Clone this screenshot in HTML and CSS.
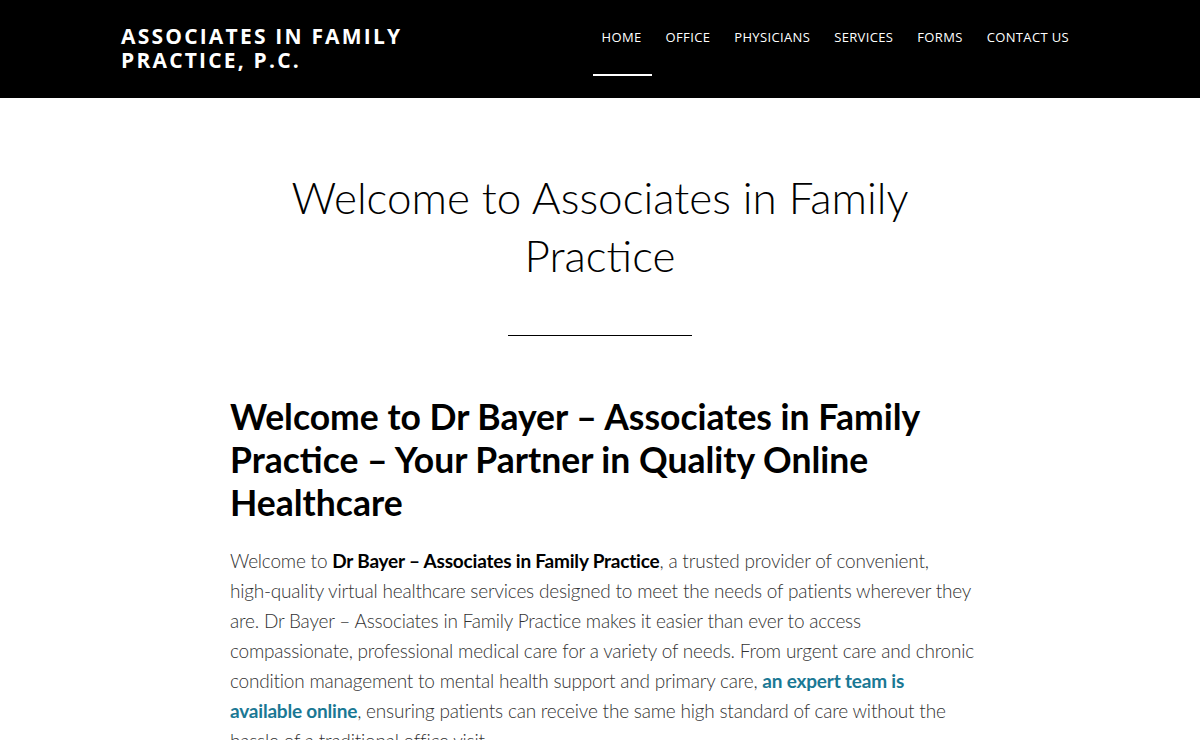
FILE: index.html
```html
<!DOCTYPE html>
<html lang="en">
<head>
<meta charset="utf-8">
<title>Associates in Family Practice, P.C.</title>
<link rel="stylesheet" href="styles.css">
</head>
<body>
<header class="site-header">
  <div class="header-inner">
    <a class="logo" href="#">ASSOCIATES IN FAMILY<br>PRACTICE, P.C.</a>
    <nav class="main-nav">
      <a class="nav-item active" href="#">HOME</a>
      <a class="nav-item" href="#">OFFICE</a>
      <a class="nav-item" href="#">PHYSICIANS</a>
      <a class="nav-item" href="#">SERVICES</a>
      <a class="nav-item" href="#">FORMS</a>
      <a class="nav-item" href="#">CONTACT US</a>
    </nav>
  </div>
</header>
<main class="content">
  <h1 class="page-title">Welcome to Associates in Family<br>Practice</h1>
  <hr class="divider">
  <article class="entry">
    <h2 class="entry-heading">Welcome to Dr Bayer – Associates in Family Practice – Your Partner in Quality Online Healthcare</h2>
    <p class="entry-text">Welcome to <strong>Dr Bayer – Associates in Family Practice</strong>, a trusted provider of convenient,<br>high-quality virtual healthcare services designed to meet the needs of patients wherever they<br>are. Dr Bayer – Associates in Family Practice makes it easier than ever to access<br>compassionate, professional medical care for a variety of needs. From urgent care and chronic<br>condition management to mental health support and primary care, <a class="link" href="#">an expert team is<br>available online</a>, ensuring patients can receive the same high standard of care without the<br>hassle of a traditional office visit.</p>
  </article>
</main>
</body>
</html>
```

FILE: styles.css
```css
* { box-sizing: border-box; }
html, body { margin: 0; padding: 0; }
body {
  background: #fff;
  color: #000;
  font-family: "Lato", "Noto Sans", sans-serif;
}
a { text-decoration: none; color: inherit; }

.site-header {
  background: #000;
  height: 98px;
}
.header-inner {
  width: 960px;
  margin: 0 auto;
  height: 100%;
  display: flex;
  justify-content: space-between;
  align-items: flex-start;
  padding-left: 1px;
}
.logo {
  margin-top: 24px;
  color: #fff;
  font-family: "Open Sans", sans-serif;
  font-weight: 700;
  font-size: 21px;
  line-height: 24px;
  letter-spacing: 2.2px;
}
.main-nav {
  display: flex;
  margin-right: -1px;
}
.nav-item {
  color: #fff;
  font-family: "Open Sans", sans-serif;
  font-size: 13px;
  letter-spacing: 0.35px;
  padding: 28px 12px 0;
  height: 77px;
  position: relative;
}
.nav-item.active::after {
  content: "";
  position: absolute;
  left: 3px;
  right: 2px;
  bottom: 1px;
  height: 2px;
  background: #fff;
}

.content {
  width: 740px;
  margin: 0 auto;
  padding-top: 70px;
}
.page-title {
  margin: 0;
  text-align: center;
  font-weight: 300;
  font-size: 44px;
  line-height: 58px;
  color: #000;
}
.divider {
  width: 184px;
  border: 0;
  border-top: 1px solid #000;
  margin: 51px auto 59px;
}
.entry-heading {
  margin: 0 0 22px;
  font-weight: 700;
  font-size: 35.5px;
  line-height: 43px;
  color: #000;
}
.entry-text {
  margin: 0;
  font-weight: 300;
  font-size: 19px;
  line-height: 30px;
  letter-spacing: -0.2px;
  white-space: nowrap;
  color: #333;
}
.entry-text strong { font-weight: 700; color: #000; }
.link { color: #1a7894; font-weight: 700; }
```
